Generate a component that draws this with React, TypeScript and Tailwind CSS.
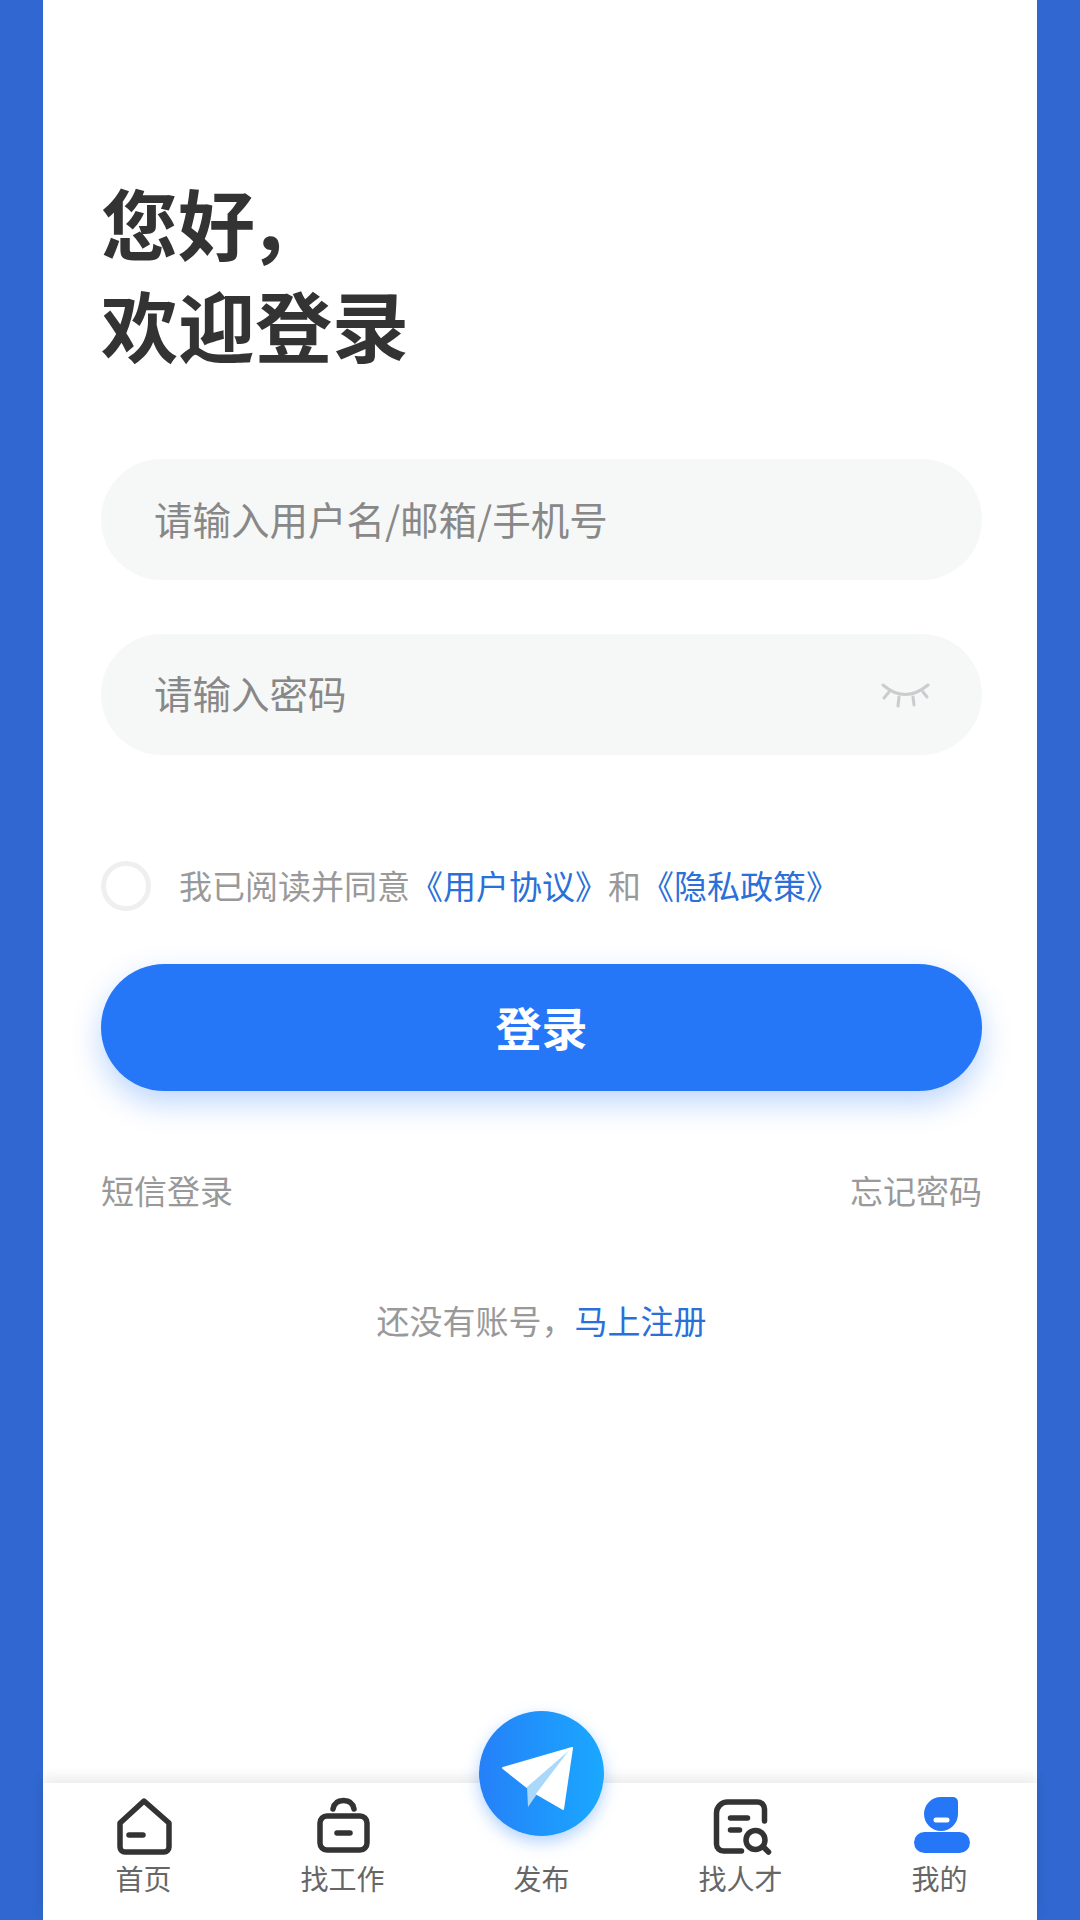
import React from "react";

function HomeIcon() {
  return (
    <svg width="60" height="62" viewBox="0 0 60 62" fill="none" stroke="#333333" strokeWidth="5.5" strokeLinecap="round" strokeLinejoin="round">
      <path d="M30 5L6 27V51a5 5 0 0 0 5 5H50a5 5 0 0 0 5-5V27Z" />
      <path d="M15 39H29" />
    </svg>
  );
}

function BagIcon() {
  return (
    <svg width="60" height="62" viewBox="0 0 60 62" fill="none" stroke="#333333" strokeWidth="5.5" strokeLinecap="round" strokeLinejoin="round">
      <rect x="7" y="20" width="47" height="34" rx="7" />
      <path d="M20 13C21 7 25 4.5 30.5 4.5S40 7 41 13" />
      <path d="M24 37H37" />
    </svg>
  );
}

function TalentIcon() {
  return (
    <svg width="64" height="62" viewBox="-1.5 0 64 62" fill="none" stroke="#333333" strokeWidth="5.5" strokeLinecap="round" strokeLinejoin="round">
      <path d="M54 25V13a7 7 0 0 0-7-7H17A11 11 0 0 0 6 17V48a7 7 0 0 0 7 7H31" />
      <path d="M20 22H37" />
      <path d="M20 34H29" />
      <circle cx="45" cy="44" r="9.5" />
      <path d="M53 51L58 56" />
    </svg>
  );
}

function MeIcon() {
  return (
    <svg width="64" height="62" viewBox="-2 0 64 62">
      <path d="M31 1H43a5 5 0 0 1 5 5V18A17 17 0 1 1 14 18A17 17 0 0 1 31 1Z" fill="#2577f8" />
      <rect x="4" y="36" width="56" height="21" rx="10.5" fill="#2577f8" />
      <path d="M26 24H37" stroke="#ffffff" strokeWidth="5" strokeLinecap="round" />
    </svg>
  );
}

function EyeClosed() {
  return (
    <svg width="50" height="30" viewBox="0 0 50 30" fill="none" stroke="#c9cdcd" strokeWidth="3" strokeLinecap="round">
      <path d="M3 5Q25 24 48 5" />
      <path d="M9 12L4 18" />
      <path d="M19 17L18 26" />
      <path d="M33 17L34 25" />
      <path d="M43 12L47 17" />
    </svg>
  );
}

function PlaneButton() {
  return (
    <div className="absolute left-[436px] top-[-72px] h-[125px] w-[125px] rounded-full bg-gradient-to-r from-[#2580f8] to-[#1aa8ff] shadow-[0_6px_16px_rgba(37,128,248,0.35)]">
      <svg width="125" height="125" viewBox="0 0 125 125">
        <path d="M93 37L24 57L48 76Z" fill="#ffffff" strokeLinejoin="round" stroke="#ffffff" strokeWidth="2" />
        <path d="M93 37L48 76L49 96L58 83Z" fill="#a9d8fa" />
        <path d="M93 37L58 83L84 98Z" fill="#ffffff" strokeLinejoin="round" stroke="#ffffff" strokeWidth="2" />
      </svg>
    </div>
  );
}

const tabs = [
  { label: "首页", icon: <HomeIcon /> },
  { label: "找工作", icon: <BagIcon /> },
  { label: "发布", icon: <div className="h-[62px]" /> },
  { label: "找人才", icon: <TalentIcon /> },
  { label: "我的", icon: <MeIcon /> },
];

export default function App() {
  return (
    <div className="h-[1920px] w-[1080px] overflow-hidden bg-[#3067d0] px-[43px] font-['Noto_Sans_CJK_SC',sans-serif]">
      <div className="flex h-full flex-col bg-white">
        <div className="flex flex-col pl-[58px] pr-[55px] pt-[171px]">
          <h1 className="text-[77px] font-bold leading-[102px] text-[#333333]">
            您好<span className="ml-[-6px]">，</span>
            <br />
            欢迎登录
          </h1>

          <input
            placeholder="请输入用户名/邮箱/手机号"
            className="mt-[84px] h-[121px] rounded-full bg-[#f6f7f7] pb-[4px] pl-[53px] pr-[54px] text-[38.5px] outline-none placeholder:text-[#888888]"
          />

          <div className="mt-[54px] flex h-[121px] items-center rounded-full bg-[#f6f7f7] pl-[53px] pr-[52px]">
            <input
              placeholder="请输入密码"
              className="min-w-0 flex-1 bg-transparent pb-[4px] text-[38.5px] outline-none placeholder:text-[#888888]"
            />
            <EyeClosed />
          </div>

          <div className="mt-[106px] flex h-[50px] items-center">
            <div className="h-[50px] w-[50px] rounded-full border-[5px] border-[#efefef]" />
            <p className="ml-[28px] pb-[2px] text-[33px] leading-[46px] text-[#999999]">
              我已阅读并同意
              <span className="text-[#2a70d8]">《用户协议》</span>
              和
              <span className="text-[#2a70d8]">《隐私政策》</span>
            </p>
          </div>

          <button className="mt-[53px] h-[127px] rounded-full bg-[#2577f8] pb-[2px] text-[46px] font-bold text-white shadow-[0_12px_30px_rgba(37,119,248,0.3)]">
            登录
          </button>

          <div className="mt-[76px] flex justify-between text-[33px] leading-[46px] text-[#999999]">
            <span>短信登录</span>
            <span>忘记密码</span>
          </div>

          <p className="mt-[84px] text-center text-[33px] leading-[46px] text-[#999999]">
            还没有账号，<span className="text-[#2a70d8]">马上注册</span>
          </p>
        </div>

        <nav className="relative mt-auto grid h-[137px] grid-cols-[repeat(5,199px)] bg-white pl-[1px] shadow-[0_-6px_12px_rgba(0,0,0,0.08)]">
          <PlaneButton />
          {tabs.map((tab) => (
            <div key={tab.label} className="flex flex-col items-center pt-[13px]">
              {tab.icon}
              <span className="text-[28px] leading-[40px] text-[#666666]">{tab.label}</span>
            </div>
          ))}
        </nav>
      </div>
    </div>
  );
}
